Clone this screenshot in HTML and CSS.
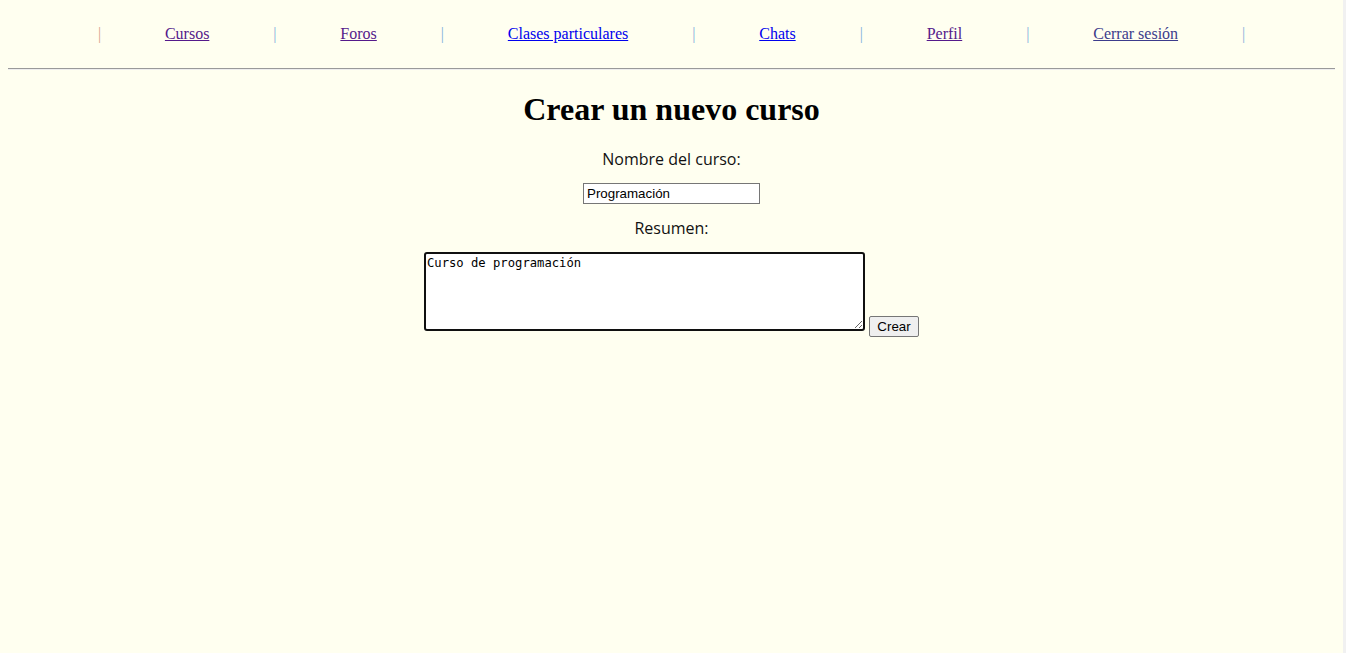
FILE: index.html
```html
<!DOCTYPE html>
<html lang="es">
<head>
<meta charset="utf-8">
<title>Crear un nuevo curso</title>
<link rel="stylesheet" href="styles.css">
</head>
<body>
<nav class="nav">
  <span class="sep">|</span>
  <a class="nav-link visited" href="#">Cursos</a>
  <span class="sep">|</span>
  <a class="nav-link visited" href="#">Foros</a>
  <span class="sep">|</span>
  <a class="nav-link" href="#">Clases particulares</a>
  <span class="sep">|</span>
  <a class="nav-link" href="#">Chats</a>
  <span class="sep">|</span>
  <a class="nav-link visited" href="#">Perfil</a>
  <span class="sep">|</span>
  <a class="nav-link logout" href="#">Cerrar sesión</a>
  <span class="sep">|</span>
</nav>
<hr class="rule">
<main class="main">
  <h1 class="title">Crear un nuevo curso</h1>
  <form class="form">
    <label class="label" for="nombre">Nombre del curso:</label>
    <input class="input" id="nombre" type="text" value="Programación">
    <label class="label" for="resumen">Resumen:</label>
    <div class="row">
      <textarea class="textarea" id="resumen">Curso de programación</textarea>
      <button class="button" type="button">Crear</button>
    </div>
  </form>
</main>
</body>
</html>
```
FILE: styles.css
```css
html {
  background: #f1f1f1;
  margin: 0;
  padding: 0;
}
body {
  margin: 0;
  padding: 8px;
  width: 1343px;
  box-sizing: border-box;
  min-height: 653px;
  background: #fffff0;
  font-family: "Liberation Serif", "Times New Roman", serif;
  font-size: 16px;
}
.nav {
  display: flex;
  justify-content: center;
  align-items: center;
  height: 18px;
  padding: 17px 0 17px;
  line-height: 18px;
}
.sep {
  color: #7fb0dc;
  display: inline-block;
  width: 3px;
  text-align: center;
}
.sep:first-child { color: #d9a28a; }
.nav-link {
  margin: 0 64px;
  color: #0000ee;
}
.nav-link.visited { color: #551a8b; }
.nav-link.logout { color: #3c3c8c; }
.rule {
  margin: 8px 0;
  border: 0;
  height: 0;
  border-top: 1px solid #9a9a9a;
  border-bottom: 1px solid #eeeeee;
}
.main {
  display: flex;
  flex-direction: column;
  align-items: center;
}
.title {
  font-size: 32px;
  font-weight: bold;
  margin: 13px 0 22px;
  line-height: 37px;
}
.form {
  display: flex;
  flex-direction: column;
  align-items: center;
}
.label {
  font-family: "Open Sans", "DejaVu Sans", sans-serif;
  font-size: 16px;
  line-height: 18px;
  color: #111;
}
.input {
  margin: 15px 0 15px;
  width: 177px;
  height: 21px;
  box-sizing: border-box;
  border: 1px solid #767676;
  padding: 1px 3px;
  font-family: "Liberation Sans", Arial, sans-serif;
  font-size: 13.33px;
  background: #fff;
  color: #000;
}
.row {
  margin-top: 15px;
  display: flex;
  align-items: flex-end;
  gap: 4px;
}
.textarea {
  width: 441px;
  height: 79px;
  box-sizing: border-box;
  border: 2px solid #101010;
  border-radius: 3px;
  padding: 1px 1px;
  font-family: "DejaVu Sans Mono", "Liberation Mono", monospace;
  font-size: 12.2px;
  line-height: 16px;
  background: #fff;
  color: #000;
  outline: none;
  resize: both;
  display: block;
}
.button {
  width: 50px;
  height: 21px;
  margin-bottom: -6px;
  box-sizing: border-box;
  border: 1px solid #767676;
  border-radius: 2px;
  background: #efefef;
  font-family: "Liberation Sans", Arial, sans-serif;
  font-size: 13.33px;
  color: #000;
  padding: 0;
}
```
